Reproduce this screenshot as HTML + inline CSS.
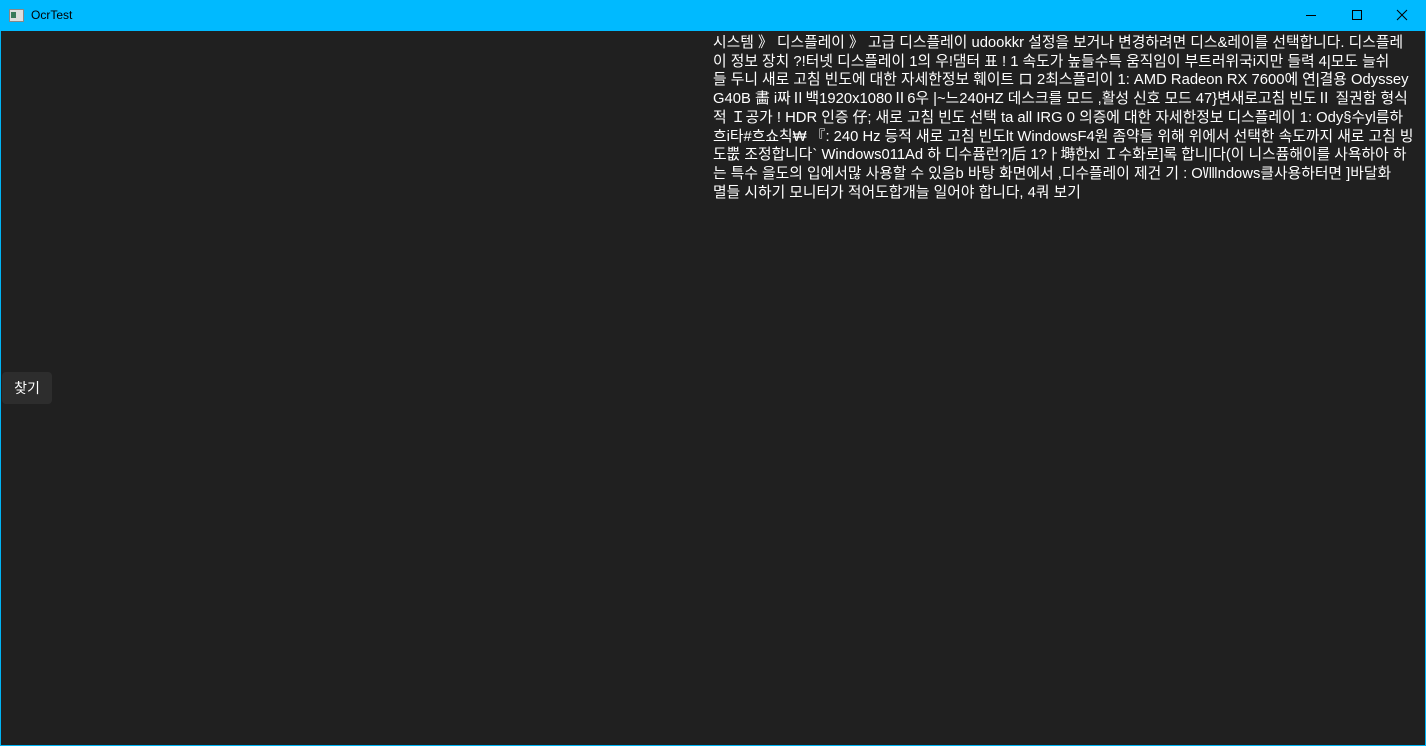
<!DOCTYPE html>
<html><head><meta charset="utf-8"><style>
html,body{margin:0;padding:0;width:1426px;height:746px;overflow:hidden;background:#00b4f5;}
.win{position:absolute;left:1px;top:31px;width:1424px;height:714px;background:#202020;}
.tb{position:absolute;left:0;top:0;width:1426px;height:31px;background:#00baff;}
.title{position:absolute;left:31px;top:8px;font:12px "Liberation Sans",sans-serif;color:#000;}
.ico{position:absolute;left:9px;top:9px;width:13px;height:11px;border:1px solid #888;background:#ddd;}
.ico:before{content:"";position:absolute;left:1px;top:2px;width:5px;height:6px;background:#3a7a5a;}
.ctl{position:absolute;top:0;width:46px;height:31px;}
.txt{position:absolute;left:713px;top:34px;font:14.8px "Liberation Sans","Noto Sans CJK KR",sans-serif;color:#fff;line-height:18.7px;white-space:nowrap;}
.btn{position:absolute;left:2px;top:372px;width:50px;height:32px;background:#2d2d2d;border-radius:4px;color:#fff;font:14px "Liberation Sans","Noto Sans CJK KR",sans-serif;line-height:32px;text-align:center;}
</style></head><body>
<div class="tb"><div class="ico"></div><div class="title">OcrTest</div>
<svg class="ctl" style="left:1288px" viewBox="0 0 46 31"><line x1="18" y1="15.5" x2="28" y2="15.5" stroke="#000"/></svg>
<svg class="ctl" style="left:1334px" viewBox="0 0 46 31"><rect x="18.5" y="10.5" width="9" height="9" fill="none" stroke="#000"/></svg>
<svg class="ctl" style="left:1380px" viewBox="0 0 46 31"><path d="M17 10L27 20M27 10L17 20" stroke="#000"/></svg>
</div>
<div class="win"></div>
<div class="txt">
<div>시스템 》 디스플레이 》 고급 디스플레이 udookkr 설정을 보거나 변경하려면 디스&amp;레이를 선택합니다. 디스플레</div>
<div>이 정보 장치 ?!터넷 디스플레이 1의 우!댐터 표 ! 1 속도가 높들수특 움직임이 부트러위국i지만 들력 4|모도 늘쉬</div>
<div>들 두니 새로 고침 빈도에 대한 자세한정보 훼이트 ロ 2최스플리이 1: AMD Radeon RX 7600에 연|결용 Odyssey</div>
<div>G40B 畵 i짜Ⅱ백1920x1080Ⅱ6우 |~느240HZ 데스크를 모드 ,활성 신호 모드 47}변새로고침 빈도Ⅱ 질권함 형식</div>
<div>적 Ｉ공가 ! HDR 인증 仔; 새로 고침 빈도 선택 ta all IRG 0 의증에 대한 자세한정보 디스플레이 1: Ody§수yl름하</div>
<div>흐i타#흐쇼칙₩ 『: 240 Hz 등적 새로 고침 빈도lt WindowsF4원 좀약들 위해 위에서 선택한 속도까지 새로 고침 빙</div>
<div>도뿞 조정합니다` Windows011Ad 하 디수퓸런?|后 1?ㅏ塒한xl Ｉ수화로]록 합니|다(이 니스퓸해이를 사욕하아 하</div>
<div>는 특수 을도의 입에서많 사용할 수 있음b 바탕 화면에서 ,디수플레이 제건 기 : OⅧndows클사용하터면 ]바달화</div>
<div>멸들 시하기 모니터가 적어도합개늘 일어야 합니다, 4쿼 보기</div>
</div>
<div class="btn">찾기</div>
</body></html>
